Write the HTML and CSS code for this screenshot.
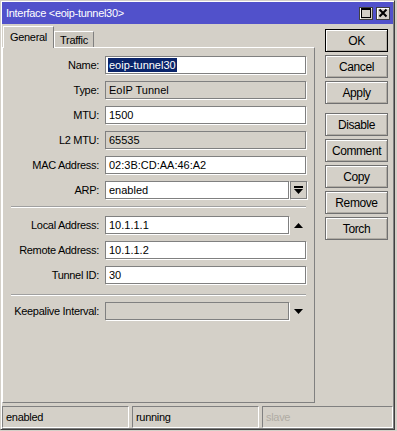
FILE: index.html
```html
<!DOCTYPE html>
<html>
<head>
<meta charset="utf-8">
<link rel="stylesheet" href="styles.css">
</head>
<body>
<div class="window">
  <div class="titlebar">
    <span class="title">Interface &lt;eoip-tunnel30&gt;</span>
    <div class="tb-buttons">
      <span class="tb-btn"><svg width="10" height="10" viewBox="0 0 10 10"><rect x="0.5" y="0.5" width="9" height="9" fill="none" stroke="#000"/><rect x="0" y="0" width="10" height="2" fill="#000"/></svg></span>
      <span class="tb-btn"><svg width="10" height="10" viewBox="0 0 10 10"><path d="M1.5 1.5 L8.5 8.5 M8.5 1.5 L1.5 8.5" stroke="#000" stroke-width="2"/></svg></span>
    </div>
  </div>
  <div class="main">
    <div class="left">
      <div class="tabs">
        <div class="tab active">General</div>
        <div class="tab">Traffic</div>
      </div>
      <div class="panel">
        <div class="row"><span class="label">Name:</span><div class="field"><span class="sel">eoip-tunnel30</span></div></div>
        <div class="row"><span class="label">Type:</span><div class="field ro">EoIP Tunnel</div></div>
        <div class="row"><span class="label">MTU:</span><div class="field">1500</div></div>
        <div class="row"><span class="label">L2 MTU:</span><div class="field ro">65535</div></div>
        <div class="row"><span class="label">MAC Address:</span><div class="field">02:3B:CD:AA:46:A2</div></div>
        <div class="row"><span class="label">ARP:</span><div class="field short">enabled</div><span class="dd-btn"><svg width="9" height="9" viewBox="0 0 9 9"><rect x="0" y="0" width="9" height="2" fill="#000"/><path d="M0 3 H9 L4.5 8 Z" fill="#000"/></svg></span></div>
        <div class="sep"></div>
        <div class="row"><span class="label">Local Address:</span><div class="field short">10.1.1.1</div><span class="arrow"><svg width="9" height="5" viewBox="0 0 9 5"><path d="M0 5 L4.5 0 L9 5 Z" fill="#000"/></svg></span></div>
        <div class="row"><span class="label">Remote Address:</span><div class="field">10.1.1.2</div></div>
        <div class="row"><span class="label">Tunnel ID:</span><div class="field">30</div></div>
        <div class="sep sep2"></div>
        <div class="row"><span class="label">Keepalive Interval:</span><div class="field short ro"></div><span class="arrow"><svg width="9" height="5" viewBox="0 0 9 5"><path d="M0 0 L9 0 L4.5 5 Z" fill="#000"/></svg></span></div>
      </div>
    </div>
    <div class="buttons">
      <div class="btn default">OK</div>
      <div class="btn">Cancel</div>
      <div class="btn">Apply</div>
      <div class="btn gap">Disable</div>
      <div class="btn">Comment</div>
      <div class="btn">Copy</div>
      <div class="btn">Remove</div>
      <div class="btn">Torch</div>
    </div>
  </div>
  <div class="status">
    <div class="cell">enabled</div>
    <div class="cell">running</div>
    <div class="cell wide dim">slave</div>
  </div>
</div>
</body>
</html>
```

FILE: styles.css
```css
html, body {
  margin: 0;
  padding: 0;
  background: #d4d0c8;
}
body {
  font-family: "Liberation Sans", Arial, sans-serif;
  font-size: 11px;
  color: #000;
}
.window {
  box-sizing: border-box;
  width: 395px;
  height: 430px;
  border: 1px solid;
  border-color: #d4d0c8 #404040 #404040 #d4d0c8;
  box-shadow: inset 1px 1px #fff, inset -1px -1px #808080;
  padding: 1px;
  background: #d4d0c8;
  display: flex;
  flex-direction: column;
}
.titlebar {
  height: 22px;
  background: #5151cb;
  display: flex;
  align-items: center;
  justify-content: space-between;
  padding: 0 3px 0 4px;
  flex-shrink: 0;
}
.title {
  color: #fff;
  font-size: 11px;
  letter-spacing: -0.3px;
}
.tb-buttons {
  display: flex;
  gap: 3px;
}
.tb-btn {
  box-sizing: border-box;
  width: 14px;
  height: 13px;
  background: #d4d0c8;
  border: 1px solid #404040;
  box-shadow: inset 1px 1px #fff;
  display: flex;
  align-items: center;
  justify-content: center;
}
.main {
  display: flex;
  flex: 1;
}
.left {
  width: 313px;
  display: flex;
  flex-direction: column;
}
.tabs {
  display: flex;
  align-items: flex-end;
  margin-top: 2px;
  padding-left: 1px;
  position: relative;
  z-index: 1;
}
.tab {
  box-sizing: border-box;
  height: 16px;
  width: 40px;
  border: 1px solid;
  border-color: #fff #808080 transparent #fff;
  border-bottom: none;
  background: #ccc8c0;
  display: flex;
  align-items: center;
  justify-content: center;
  letter-spacing: -0.3px;
}
.tab.active {
  width: 51px;
  height: 22px;
  margin-bottom: -1px;
  background: #d4d0c8;
  padding-bottom: 2px;
}
.panel {
  box-sizing: border-box;
  height: 356px;
  border: 1px solid;
  border-color: #fff #808080 #808080 #fff;
  padding: 8px 0 0 0;
  display: flex;
  flex-direction: column;
  gap: 7px;
}
.row {
  display: flex;
  align-items: center;
  height: 18px;
}
.label {
  width: 96px;
  text-align: right;
  margin-right: 6px;
  white-space: nowrap;
  letter-spacing: -0.3px;
}
.field {
  box-sizing: border-box;
  width: 201px;
  height: 18px;
  background: #fff;
  border: 1px solid #808080;
  box-shadow: 1px 1px 0 #fff;
  padding: 0 3px;
  display: flex;
  align-items: center;
  white-space: nowrap;
}
.field.short {
  width: 184px;
}
.field.ro {
  background: #d4d0c8;
}
.sel {
  background: #0a246a;
  color: #fff;
  margin-left: -1px;
  padding: 1px 1px;
}
.dd-btn {
  box-sizing: border-box;
  width: 17px;
  height: 18px;
  margin-left: 1px;
  border: 1px solid #808080;
  box-shadow: 1px 1px 0 #fff;
  display: flex;
  align-items: center;
  justify-content: center;
}
.arrow {
  width: 17px;
  margin-left: 1px;
  display: flex;
  justify-content: center;
}
.sep {
  height: 0;
  border-top: 1px solid #a0a0a0;
  border-bottom: 1px solid #fff;
  margin: 0 8px 1px 8px;
}
.sep2 {
  margin-top: 3px;
  margin-bottom: -1px;
}
.buttons {
  margin-left: 10px;
  margin-top: 5px;
  width: 63px;
  display: flex;
  flex-direction: column;
  gap: 3px;
}
.btn {
  box-sizing: border-box;
  height: 23px;
  border: 1px solid #707070;
  box-shadow: inset 1px 1px #fff, inset -1px -1px #b0aca4;
  display: flex;
  align-items: center;
  justify-content: center;
  font-size: 12px;
  letter-spacing: -0.4px;
}
.btn.default {
  border-color: #000;
}
.btn.gap {
  margin-top: 6px;
}
.status {
  display: flex;
  gap: 3px;
  margin-top: 3px;
  height: 22px;
}
.cell {
  box-sizing: border-box;
  width: 127px;
  height: 22px;
  border: 1px solid;
  border-color: #808080 #fff #fff #808080;
  padding-left: 3px;
  display: flex;
  align-items: center;
  letter-spacing: -0.3px;
}
.cell.wide {
  width: 131px;
}
.cell.dim {
  color: #b0aca4;
}
```
